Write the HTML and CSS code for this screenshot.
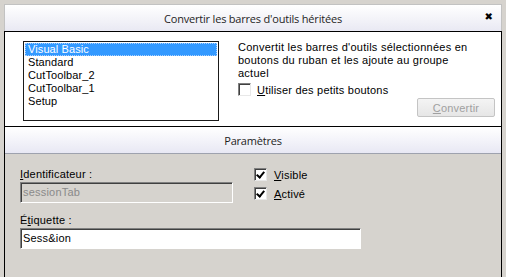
FILE: index.html
```html
<!DOCTYPE html>
<html lang="fr">
<head>
    <meta charset="UTF-8">
    <title>Convertir les barres d'outils héritées</title>
    <link rel="stylesheet" href="styles.css">
</head>
<body>
    <div class="window">
        <div class="titlebar">
            <span class="title">Convertir les barres d'outils héritées</span>
            <span class="close">&#x2716;</span>
        </div>
        <div class="dialog">
            <div class="top-panel">
                <ul class="list">
                    <li class="selected">Visual Basic</li>
                    <li>Standard</li>
                    <li>CutToolbar_2</li>
                    <li>CutToolbar_1</li>
                    <li>Setup</li>
                </ul>
                <div class="side">
                    <p class="desc">Convertit les barres d'outils sélectionnées en boutons du ruban et les ajoute au groupe actuel</p>
                    <label class="check">
                        <span class="box"></span>
                        <span><u>U</u>tiliser des petits boutons</span>
                    </label>
                    <div class="actions">
                        <button class="btn" disabled><u>C</u>onvertir</button>
                    </div>
                </div>
            </div>
            <div class="section-head">Paramètres</div>
            <div class="params">
                <div class="row">
                    <div class="field">
                        <div class="label"><u>I</u>dentificateur :</div>
                        <div class="input disabled">sessionTab</div>
                    </div>
                    <div class="checks">
                        <label class="check">
                            <span class="box checked"></span>
                            <span><u>V</u>isible</span>
                        </label>
                        <label class="check">
                            <span class="box checked"></span>
                            <span><u>A</u>ctivé</span>
                        </label>
                    </div>
                </div>
                <div class="field wide">
                    <div class="label">É<u>t</u>iquette :</div>
                    <div class="input">Sess&amp;ion</div>
                </div>
            </div>
        </div>
    </div>
</body>
</html>
```

FILE: styles.css
```css
* {
    margin: 0;
    padding: 0;
    box-sizing: border-box;
}

body {
    font-family: "Liberation Sans", Arial, sans-serif;
    font-size: 11px;
    color: #000;
    background-color: #d6d3ce;
    height: 277px;
    overflow: hidden;
}

.window {
    margin: 4px 4px 0 4px;
    width: 498px;
    height: 273px;
    display: flex;
    flex-direction: column;
}

.titlebar {
    height: 27px;
    border: 1px solid #c2c2c2;
    border-bottom: none;
    background: linear-gradient(#ffffff, #e9e9f3);
    display: flex;
    align-items: center;
    justify-content: center;
    position: relative;
}

.title {
    font-family: "Open Sans", sans-serif;
    font-size: 11px;
    color: #1e1e1e;
    letter-spacing: -0.2px;
}

.close {
    position: absolute;
    right: 8px;
    top: 6px;
    font-family: "DejaVu Sans", sans-serif;
    font-size: 10px;
    font-weight: bold;
}

.dialog {
    flex: 1;
    border: 1px solid #000;
    border-bottom: none;
    display: flex;
    flex-direction: column;
}

.top-panel {
    background-color: #fff;
    height: 95px;
    border-bottom: 1px solid #000;
    display: flex;
    padding: 9px 0 0 18px;
}

.list {
    list-style: none;
    width: 196px;
    height: 80px;
    border: 1px solid #1a1a1a;
    padding: 1px;
}

.list li {
    height: 13px;
    line-height: 13px;
    padding-left: 3px;
    letter-spacing: 0.1px;
}

.list li.selected {
    background-color: #3399ff;
    color: #fff;
    outline: 1px dotted #a8d0ff;
    outline-offset: -1px;
}

.side {
    margin-left: 19px;
    width: 258px;
    display: flex;
    flex-direction: column;
}

.desc {
    width: 236px;
    line-height: 13px;
    letter-spacing: 0.25px;
}

.check {
    display: flex;
    align-items: center;
    gap: 6px;
    height: 13px;
}

.side .check {
    margin-top: 3px;
    letter-spacing: 0.2px;
}

.box {
    width: 13px;
    height: 13px;
    background-color: #fff;
    border-top: 1px solid #808080;
    border-left: 1px solid #808080;
    border-right: 1px solid #e8e8e8;
    border-bottom: 1px solid #e8e8e8;
    box-shadow: inset 1px 1px 0 #404040;
    position: relative;
}

.box.checked::after {
    content: "";
    position: absolute;
    left: 3px;
    top: 1px;
    width: 3px;
    height: 6px;
    border-right: 2px solid #000;
    border-bottom: 2px solid #000;
    transform: rotate(40deg);
}

.actions {
    display: flex;
    justify-content: flex-end;
    margin-top: 2px;
    padding-right: 1px;
}

.btn {
    width: 78px;
    height: 19px;
    font-family: inherit;
    font-size: 11px;
    letter-spacing: 0.2px;
    color: #a0a0a0;
    background: linear-gradient(#f4f4f4, #e6e6e6);
    border: 1px solid #c4c4c4;
    border-radius: 2px;
}

.section-head {
    height: 27px;
    background: linear-gradient(#ffffff, #e8e8f4);
    border-bottom: 1px solid #9ea2ae;
    display: flex;
    align-items: center;
    justify-content: center;
    font-family: "Open Sans", sans-serif;
    font-size: 11px;
    color: #1e1e1e;
    letter-spacing: -0.2px;
}

.params {
    flex: 1;
    padding: 13px 0 0 15px;
    letter-spacing: 0.2px;
}

.row {
    display: flex;
}

.field {
    width: 213px;
}

.field.wide {
    width: 341px;
    margin-top: 10px;
}

.label {
    height: 14px;
    line-height: 14px;
    margin-bottom: 1px;
}

.input {
    height: 21px;
    line-height: 19px;
    padding-left: 2px;
    background-color: #fff;
    border-top: 1px solid #808080;
    border-left: 1px solid #808080;
    border-right: 1px solid #ffffff;
    border-bottom: 1px solid #ffffff;
    box-shadow: inset 1px 1px 0 #404040;
}

.input.disabled {
    background-color: #d6d3ce;
    color: #8a8a8a;
}

.checks {
    margin-left: 21px;
    padding-top: 1px;
    display: flex;
    flex-direction: column;
    gap: 6px;
}

.checks .check {
    gap: 7px;
}
```
